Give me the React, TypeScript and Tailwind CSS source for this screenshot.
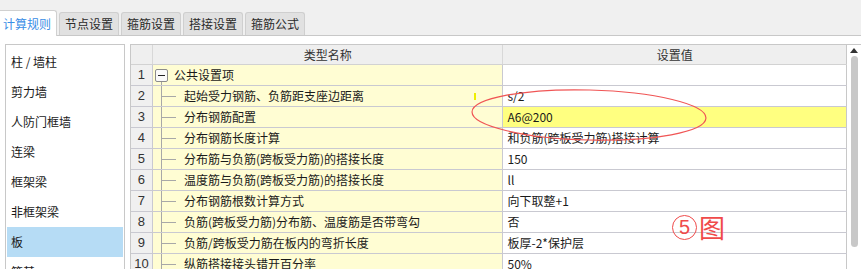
import React from 'react';

type Row = { n: number; name: string; value: string; root?: boolean; hl?: boolean };

const rows: Row[] = [
  { n: 1, name: '公共设置项', value: '', root: true },
  { n: 2, name: '起始受力钢筋、负筋距支座边距离', value: 's/2' },
  { n: 3, name: '分布钢筋配置', value: 'A6@200', hl: true },
  { n: 4, name: '分布钢筋长度计算', value: '和负筋(跨板受力筋)搭接计算' },
  { n: 5, name: '分布筋与负筋(跨板受力筋)的搭接长度', value: '150' },
  { n: 6, name: '温度筋与负筋(跨板受力筋)的搭接长度', value: 'll' },
  { n: 7, name: '分布钢筋根数计算方式', value: '向下取整+1' },
  { n: 8, name: '负筋(跨板受力筋)分布筋、温度筋是否带弯勾', value: '否' },
  { n: 9, name: '负筋/跨板受力筋在板内的弯折长度', value: '板厚-2*保护层' },
  { n: 10, name: '纵筋搭接接头错开百分率', value: '50%' },
];

const tabs = ['计算规则', '节点设置', '箍筋设置', '搭接设置', '箍筋公式'];
const members = ['柱 / 墙柱', '剪力墙', '人防门框墙', '连梁', '框架梁', '非框架梁', '板', '筏基'];

const font = { fontFamily: '"Noto Sans CJK SC", "Liberation Sans", sans-serif' };

const App: React.FC = () => {
  return (
    <div className="relative w-[861px] h-[269px] overflow-hidden bg-white text-[12px] text-[#1a1a1a]" style={font}>
      {/* tab strip */}
      <div className="flex items-end h-[36px] bg-[#f0f0f0] border-b border-[#c8c8c8]">
        {tabs.map((t, i) =>
          i === 0 ? (
            <div key={t} className="w-[57px] h-[26px] -mb-px bg-white border-r border-t border-[#d0d0d0] rounded-tr-[3px] flex items-center pl-[3px] text-[#3a8ee6]">
              {t}
            </div>
          ) : (
            <div key={t} className="w-[60px] h-[23px] ml-[2px] bg-[#e1e1e1] border border-b-0 border-[#cfcfcf] rounded-t-[3px] flex items-center justify-center text-[#2a2a2a]">
              {t}
            </div>
          )
        )}
      </div>

      <div className="flex pt-[8px]">
        {/* member list */}
        <div className="ml-[5px] w-[121px] h-[300px] border border-[#c8c8c8] px-[1px] pt-[2px]">
          {members.map((m, i) => (
            <div key={m} className={`h-[30px] flex items-center pl-[4px] ${i === 6 ? 'bg-[#b6dcf5]' : ''}`}>
              {m}
            </div>
          ))}
        </div>

        {/* settings grid */}
        <div className="ml-[5px] flex border-t border-[#c8c8c8]">
          <div className="w-[717px] border-l border-[#c8c8c8]">
            <div className="flex h-[20px] bg-[#efefef] border-b border-[#d2d2d2] text-[#333]">
              <div className="w-[22px] border-r border-[#d8d8d8]" />
              <div className="w-[351px] border-r border-[#d8d8d8] flex items-center justify-center">类型名称</div>
              <div className="w-[344px] border-r border-[#c8c8c8] flex items-center justify-center">设置值</div>
            </div>
            {rows.map((r) => (
              <div key={r.n} className="flex h-[21px] border-b border-[#c9c9d1]">
                <div className="w-[22px] bg-[#f0f0f0] border-r border-[#c9c9d1] flex items-center justify-center text-[13px] text-[#333]" style={{ fontFamily: '"Liberation Sans", sans-serif' }}>
                  {r.n}
                </div>
                <div className="w-[351px] bg-[#fffdd3] border-r border-[#c9c9d1] flex items-stretch">
                  {r.root ? (
                    <>
                      <div className="ml-[2px] w-[13px] flex flex-col items-center">
                        <div className="flex-1" />
                        <div className="w-[13px] h-[13px] rounded-[2px] border border-[#8c8c8c] bg-[#fafafa] flex items-center justify-center">
                          <div className="w-[7px] h-px bg-[#222]" />
                        </div>
                        <div className="flex-1 w-px bg-[#a8a8a8]" />
                      </div>
                      <div className="ml-[6px] flex items-center">{r.name}</div>
                    </>
                  ) : (
                    <>
                      <div className="ml-[8px] w-[15px] border-l border-[#a8a8a8] flex items-center">
                        <div className="w-full h-px bg-[#a8a8a8]" />
                      </div>
                      <div className="ml-[8px] flex items-center">{r.name}</div>
                    </>
                  )}
                </div>
                <div className={`w-[344px] border-r border-[#c8c8c8] flex items-center pl-[4px] ${r.hl ? 'bg-[#ffff80]' : 'bg-white'}`}>
                  {r.value}
                </div>
              </div>
            ))}
          </div>
          {/* scrollbar */}
          <div className="w-[14px] flex flex-col items-center pt-[3px] bg-white">
            <svg width="8" height="5" viewBox="0 0 8 5"><path d="M0 5 L4 0 L8 5 Z" fill="#333" /></svg>
            <div className="mt-[3px] w-[7px] h-[191px] rounded-full bg-[#c8c8c8]" />
          </div>
        </div>
      </div>

      {/* annotations */}
      <div className="absolute left-[474px] top-[93px] w-[2px] h-[7px] bg-[#eeee00]" />
      <svg className="absolute left-0 top-0 pointer-events-none" width="861" height="269">
        <ellipse cx="589" cy="115" rx="117" ry="25" fill="none" stroke="#f05555" strokeWidth="1.2" transform="rotate(1.5 589 115)" />
      </svg>
      <div className="absolute left-[672px] top-[214px] flex items-center gap-[2px] text-[#f04a4a]">
        <div className="w-[25px] h-[25px] rounded-full border border-[#f04a4a] flex items-center justify-center text-[20px] leading-none" style={{ fontFamily: '"Liberation Sans", sans-serif' }}>
          5
        </div>
        <div className="text-[26px] leading-none">图</div>
      </div>
    </div>
  );
};

export default App;
